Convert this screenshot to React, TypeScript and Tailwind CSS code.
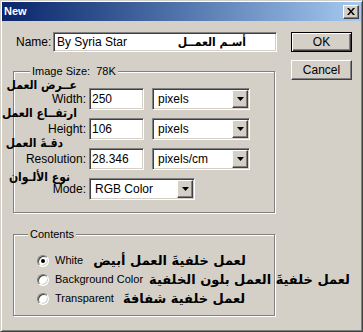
import React from 'react';

const sunken =
  'bg-white border border-t-[#808080] border-l-[#808080] border-r-white border-b-white shadow-[inset_1px_1px_0_#404040,inset_-1px_-1px_0_#d4d0c8]';
const raised =
  'bg-[#d4d0c8] border border-t-white border-l-white border-r-[#404040] border-b-[#404040] shadow-[inset_-1px_-1px_0_#808080]';
const arabic = "[font-family:'DejaVu_Sans',sans-serif] font-bold text-[13px] leading-[14px] text-black whitespace-nowrap";
const arabicSmall = "[font-family:'DejaVu_Sans_Condensed','DejaVu_Sans',sans-serif] font-bold text-[12px] leading-[14px] text-black whitespace-nowrap";

const Arrow = () => (
  <svg width="7" height="4" viewBox="0 0 7 4">
    <polygon points="0,0 7,0 3.5,4" fill="#000" />
  </svg>
);

const Select: React.FC<{ value: string; width: string }> = ({ value, width }) => (
  <div className={`${sunken} ${width} h-[22px] p-[1px] flex items-stretch shrink-0`}>
    <span className="flex-1 pl-[4px] flex items-center text-[12px]">{value}</span>
    <div className={`${raised} w-[16px] flex items-center justify-center`}>
      <Arrow />
    </div>
  </div>
);

const Field: React.FC<{ value: string }> = ({ value }) => (
  <div className={`${sunken} w-[55px] h-[22px] flex items-center pl-[2px] text-[12px] shrink-0`}>{value}</div>
);

interface RowProps {
  label: string;
  note: string;
  noteClass: string;
  children: React.ReactNode;
}

const Row: React.FC<RowProps> = ({ label, note, noteClass, children }) => (
  <div className="flex items-center h-[22px] gap-[3px]">
    <div className="relative w-[72px] shrink-0 text-right text-[12px]">
      <span dir="rtl" className={`absolute ${noteClass} ${arabicSmall}`}>{note}</span>
      <span className="relative">{label}</span>
    </div>
    {children}
  </div>
);

const Radio: React.FC<{ checked?: boolean }> = ({ checked }) => (
  <div className="w-[12px] h-[12px] shrink-0 rounded-full bg-white border border-t-[#808080] border-l-[#808080] border-r-white border-b-white shadow-[inset_1px_1px_0_#404040,inset_-1px_-1px_0_#d4d0c8] flex items-center justify-center">
    {checked && <div className="w-[4px] h-[4px] rounded-full bg-black" />}
  </div>
);

const contents = [
  { label: 'White', note: 'لعمل خلفيةَ العمل أبيض', gap: 'ml-[10px]', checked: true },
  { label: 'Background Color', note: 'لعمل خلفيةَ العمل بلون الخلفية', gap: 'ml-[6px]', checked: false },
  { label: 'Transparent', note: 'لعمل خلفية شفافةَ', gap: 'ml-[9px]', checked: false },
];

export default function App() {
  return (
    <div className="w-[363px] h-[332px] bg-[#d4d0c8] border border-t-[#d4d0c8] border-l-[#d4d0c8] border-r-[#404040] border-b-[#404040] shadow-[inset_1px_1px_0_#fff,inset_-1px_-1px_0_#808080] p-[1px] text-black [font-family:'Liberation_Sans',Arial,sans-serif] overflow-hidden">
      {/* title bar */}
      <div className="h-[19px] flex items-center justify-between bg-gradient-to-r from-[#0a246a] to-[#a6caf0] pl-[2px] pr-[2px]">
        <span className="text-white font-bold text-[11px]">New</span>
        <div className={`${raised} w-[16px] h-[14px] flex items-center justify-center`}>
          <svg width="8" height="7" viewBox="0 0 8 7">
            <path d="M0 0h2l2 2.5L6 0h2L5 3.5 8 7H6L4 4.5 2 7H0l3-3.5z" fill="#000" />
          </svg>
        </div>
      </div>

      <div className="flex">
        <div className="w-[289px] shrink-0">
          {/* name */}
          <div className="flex items-center mt-[11px] pl-[14px] h-[20px]">
            <span className="w-[37px] text-[12px]">Name:</span>
            <div className={`${sunken} w-[224px] h-[20px] flex items-center pl-[3px] text-[12px]`}>
              <span>By Syria Star</span>
              <span dir="rtl" className={`ml-auto mr-[30px] ${arabicSmall}`}>أسـم العمــل</span>
            </div>
          </div>

          {/* image size */}
          <div className="relative ml-[11px] mt-[19px] w-[262px] h-[142px] border border-[#808080] shadow-[1px_1px_0_#fff,inset_1px_1px_0_#fff] pt-[16px]">
            <span className="absolute -top-[7px] left-[16px] px-[2px] bg-[#d4d0c8] text-[11px] leading-[13px]">Image Size:&nbsp; 78K</span>
            <div className="flex flex-col gap-[8px]">
              <Row label="Width:" note="عــرض العمل" noteClass="right-[9px] -top-[12px]">
                <Field value="250" />
                <div className="w-[2px]" />
                <Select value="pixels" width="w-[98px]" />
              </Row>
              <Row label="Height:" note="ارتفــاع العمل" noteClass="right-[9px] -top-[14px]">
                <Field value="106" />
                <div className="w-[2px]" />
                <Select value="pixels" width="w-[98px]" />
              </Row>
              <Row label="Resolution:" note="دقـةَ العمل" noteClass="right-[23px] -top-[14px]">
                <Field value="28.346" />
                <div className="w-[2px]" />
                <Select value="pixels/cm" width="w-[98px]" />
              </Row>
              <Row label="Mode:" note="نوع الألـوان" noteClass="right-[16px] -top-[10px]">
                <Select value="RGB Color" width="w-[106px]" />
              </Row>
            </div>
          </div>

          {/* contents */}
          <div className="relative ml-[11px] mt-[21px] w-[262px] h-[82px] border border-[#808080] shadow-[1px_1px_0_#fff,inset_1px_1px_0_#fff] pt-[16px]">
            <span className="absolute -top-[7px] left-[14px] px-[2px] bg-[#d4d0c8] text-[11px] leading-[13px]">Contents</span>
            {contents.map((c) => (
              <div key={c.label} className="flex items-center h-[19px] pl-[23px] whitespace-nowrap">
                <Radio checked={c.checked} />
                <span className="ml-[6px] text-[11px] shrink-0">{c.label}</span>
                <span dir="rtl" className={`${c.gap} shrink-0 ${arabic}`}>{c.note}</span>
              </div>
            ))}
          </div>
        </div>

        {/* buttons */}
        <div className="flex flex-col gap-[8px] mt-[11px]">
          <button className="w-[61px] h-[20px] bg-[#d4d0c8] border border-black shadow-[inset_1px_1px_0_#fff,inset_-1px_-1px_0_#404040,inset_-2px_-2px_0_#808080] text-[12px]">
            OK
          </button>
          <button className={`${raised} w-[61px] h-[20px] text-[12px]`}>Cancel</button>
        </div>
      </div>
    </div>
  );
}
